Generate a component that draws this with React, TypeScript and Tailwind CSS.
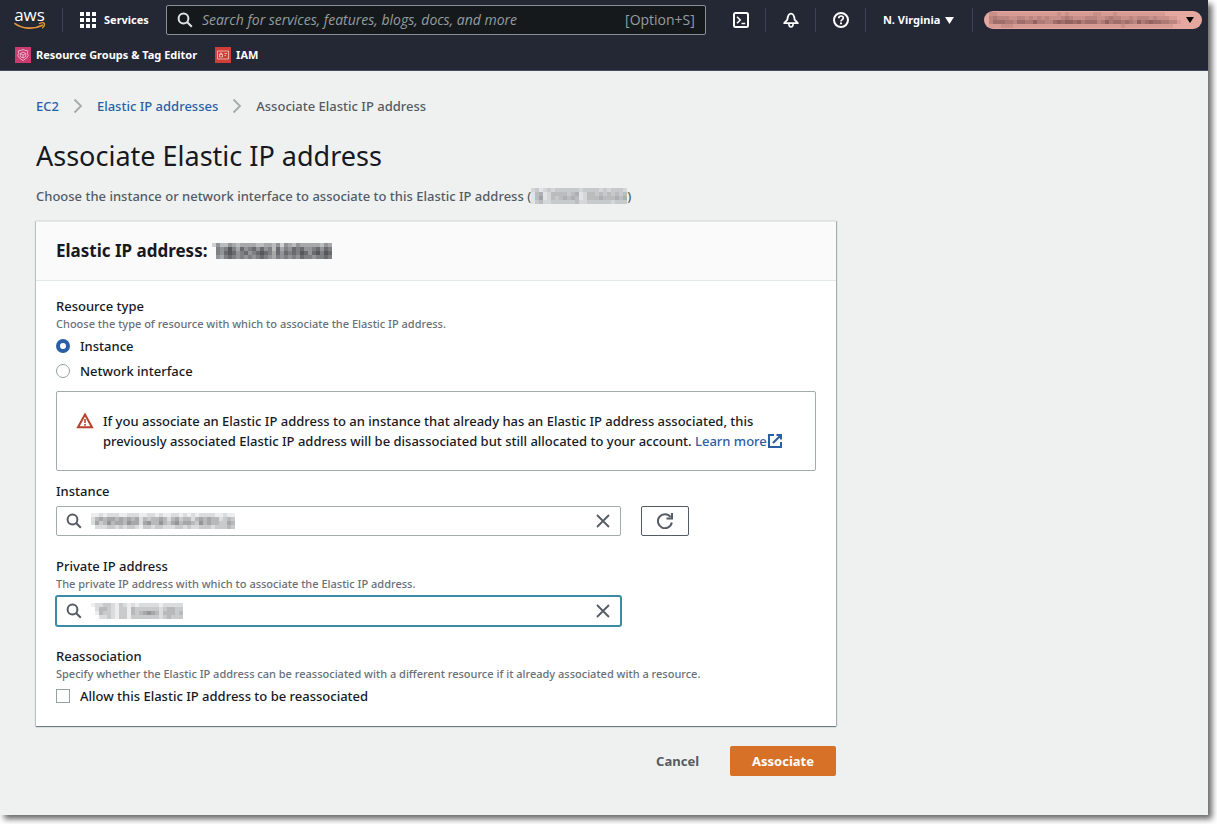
import type { ReactNode } from "react";

const NAV_FONT = "text-[11px] leading-4 font-bold";
const BODY_FONT = "text-[13px] leading-5 font-medium";

function Mosaic({ rows, cell, color, label, className }: { rows: string[]; cell: number; color: string; label: string; className?: string }) {
  const w = rows[0].length * cell;
  const h = rows.length * cell;
  return (
    <svg role="img" aria-label={label} width={w} height={h} viewBox={`0 0 ${w} ${h}`} shapeRendering="crispEdges" className={className}>
      {rows.map((row, y) =>
        row.split("").map((level, x) => (
          <rect key={`${x}-${y}`} x={x * cell} y={y * cell} width={cell} height={cell} fill={color} fillOpacity={Number(level) / 10} />
        )),
      )}
    </svg>
  );
}

const IP_SMALL = [
  "231232333333233332323332",
  "145124444345124434343434",
  "146124345454124445444545",
  "134223333334223333332333",
];
const IP_LARGE = [
  "253354344443344352543544444354",
  "065686475675756374657675567576",
  "065787567567876475767687578687",
  "054676565656765465656576656676",
];
const INSTANCE_ID = [
  "112122211222112212112212121222211211",
  "245455454545243445424534424545442343",
  "253464554655256446435645543645443354",
  "022233232332133233222332322333233343",
];
const PRIVATE_IP = [
  "12233213212122222122222",
  "02443213314333333234433",
  "01433213314345654244434",
  "00223213313333333234333",
];
const ACCOUNT = [
  "221111111111111112121111112211121111111111110000",
  "343332233232323222343222333223433223233323222110",
  "355544355446443356566564555346455454364565544331",
  "111222111111111111111111111111111211111111111100",
];

function SearchIcon({ className }: { className?: string }) {
  return (
    <svg aria-hidden="true" width="16" height="16" viewBox="0 0 16 16" fill="none" stroke="currentColor" strokeWidth="2" className={className}>
      <circle cx="6.500" cy="6.500" r="4.900" />
      <path d="M10 10l4.800 4.800" />
    </svg>
  );
}

function Divider() {
  return <span aria-hidden="true" className="h-6 w-px bg-[#3c4350]" />;
}

function IconButton({ label, children }: { label: string; children: ReactNode }) {
  return (
    <button type="button" aria-label={label} className="flex w-[49px] justify-center pl-px text-white">
      <svg aria-hidden="true" width="16" height="16" viewBox="0 0 16 16" fill="none" stroke="currentColor" strokeWidth="2" strokeLinejoin="round">
        {children}
      </svg>
    </button>
  );
}

function Header() {
  return (
    <header className="border-b border-[#454a5c] bg-[#232834] text-white">
      <div className="flex h-10 items-center">
        <a href="#home" aria-label="AWS home" className="flex w-[62px] shrink-0 pl-[14px]">
          <svg aria-hidden="true" width="32" height="32" viewBox="0 0 32 32">
            <text x="15.500" y="17" textAnchor="middle" fill="#fff" fontSize="17" fontWeight="500" fontFamily="'Open Sans', sans-serif">aws</text>
            <path d="M1 19.600C9 25.300 20 25.600 28.200 21.200" fill="none" stroke="#e8973a" strokeWidth="1.700" strokeLinecap="round" />
            <path d="M25.400 19.500c2-.9 4.400-.8 4.900-.1.400.8-.3 3-1.700 4.400" fill="none" stroke="#e8973a" strokeWidth="1.300" strokeLinecap="round" />
          </svg>
        </a>
        <Divider />
        <button type="button" className={`ml-[17px] flex items-center gap-2 ${NAV_FONT}`}>
          <svg aria-hidden="true" width="16" height="16" viewBox="0 0 16 16" fill="currentColor">
            {[0, 6, 12].map((y) => [0, 6, 12].map((x) => <rect key={`${x}-${y}`} x={x} y={y} width="4" height="4" />))}
          </svg>
          Services
        </button>
        <label className="ml-[17px] flex h-[30px] max-w-[540px] flex-1 items-center rounded-xs border border-[#8a9196] bg-[#16191c] px-[10px]">
          <SearchIcon className="shrink-0 text-[#dfe3e6]" />
          <input
            type="search"
            aria-label="Search"
            placeholder="Search for services, features, blogs, docs, and more"
            className="ml-[9px] min-w-0 flex-1 bg-transparent font-['Open_Sans','Noto_Sans',sans-serif] text-[14px] leading-5 italic outline-none placeholder:text-[#959ca1]"
          />
          <span className="font-['Open_Sans','Noto_Sans',sans-serif] text-[14px] leading-5 text-[#959ca1]">[Option+S]</span>
        </label>
        <div className="ml-[10px] flex items-center">
          <IconButton label="CloudShell">
            <rect x="1" y="1" width="14" height="14" rx="1.500" />
            <path d="M4 4.800l3.200 3.200L4 11.200M8.500 11.500H12.200" strokeWidth="1.600" strokeLinejoin="miter" />
          </IconButton>
          <Divider />
          <IconButton label="Notifications">
            <path d="M1.200 11.200h13.600L11.600 7.600C11.300 4.200 10 1.600 8 1.600S4.700 4.200 4.400 7.600z" strokeWidth="1.800" />
            <path d="M5.800 11.800c.1 2.100.8 3.200 2.200 3.200s2.100-1.100 2.200-3.200" strokeWidth="1.600" />
          </IconButton>
          <Divider />
          <IconButton label="Support">
            <circle cx="8" cy="8" r="7" />
            <path d="M5.700 6.300c.1-1.500 1-2.300 2.300-2.300s2.300.8 2.300 2c0 1.600-2.300 1.600-2.300 3.400" strokeWidth="1.700" />
            <path d="M8 10.400v1.900" />
          </IconButton>
          <Divider />
        </div>
        <button type="button" className={`ml-[17px] flex shrink-0 items-center gap-[5px] ${NAV_FONT}`}>
          N. Virginia
          <svg aria-hidden="true" width="9" height="7" viewBox="0 0 9 7" fill="currentColor"><path d="M0 0h9L4.500 7z" /></svg>
        </button>
        <div className="ml-auto flex items-center gap-[11px] pr-[6px]">
          <Divider />
          <button type="button" aria-label="Account" className="flex h-[18px] w-[218px] items-center justify-between rounded-full bg-[#e5a8a0] pr-2 pl-[5px] text-black">
            <Mosaic rows={ACCOUNT} cell={4} color="#5b3434" label="Account name, redacted" className="h-4" />
            <svg aria-hidden="true" width="8" height="6" viewBox="0 0 8 6" fill="currentColor"><path d="M0 0h8L4 6z" /></svg>
          </button>
        </div>
      </div>
      <nav aria-label="Favorites" className={`flex h-[30px] items-center gap-[18px] px-[15px] ${NAV_FONT}`}>
        <a href="#resource-groups" className="flex items-center gap-[5px]">
          <svg aria-hidden="true" width="16" height="16" viewBox="0 0 16 16" fill="none" stroke="#fff" strokeOpacity=".7" strokeWidth=".8">
            <rect width="16" height="16" fill="#cb3b70" stroke="none" />
            <path d="M8 2.400l2 1 2.800.4-.4 2.700.8 2-1.400 2.300L8 13.600l-3.800-2.800L2.800 8.500l.8-2-.4-2.700L6 3.400z" />
            <path d="M8 5l2.700 1.500v3L8 11 5.300 9.500v-3zM8 8l2.700-1.500M8 8v3M8 8L5.300 6.500" />
          </svg>
          Resource Groups &amp; Tag Editor
        </a>
        <a href="#iam" className="flex items-center gap-[5px]">
          <svg aria-hidden="true" width="16" height="16" viewBox="0 0 16 16" fill="none" stroke="#fff" strokeOpacity=".7" strokeWidth=".8">
            <rect width="16" height="16" fill="#cf3f38" stroke="none" />
            <path d="M2.500 4h11v8h-11zM4.500 7.500h3v2.500h-3zM5.200 7.500V6h1.600v1.500M9.500 6.500h2.500M9.500 8.500h1.500" />
          </svg>
          IAM
        </a>
      </nav>
    </header>
  );
}

function Chevron() {
  return (
    <svg aria-hidden="true" width="10" height="16" viewBox="0 0 10 16" fill="none" stroke="#a3abab" strokeWidth="1.800" className="mx-[14px]">
      <path d="M1.500 1.500L8 8l-6.500 6.500" />
    </svg>
  );
}

function Label({ children, htmlFor }: { children: ReactNode; htmlFor: string }) {
  return <label htmlFor={htmlFor} className="block">{children}</label>;
}

function Hint({ children }: { children: ReactNode }) {
  return <p className="text-[11px] leading-4 text-[#687078]">{children}</p>;
}

function ComboField({ id, rows, label, focused }: { id: string; rows: string[]; label: string; focused?: boolean }) {
  const frame = focused ? "border-[#3a8ba3] shadow-[0_0_0_1px_#3a8ba3]" : "border-[#a3abac]";
  return (
    <div className={`flex h-[30px] w-full max-w-[565px] items-center rounded-xs border bg-white px-[9px] ${frame}`}>
      <SearchIcon className="shrink-0 text-[#545b64]" />
      <Mosaic rows={rows} cell={4} color="#4c5054" label={label} className="ml-[9px] shrink-0" />
      <input id={id} type="text" className="min-w-0 flex-1 bg-transparent outline-none" />
      <button type="button" aria-label="Clear" className="text-[#545b64]">
        <svg aria-hidden="true" width="16" height="14" viewBox="0 0 16 14" fill="none" stroke="currentColor" strokeWidth="1.800">
          <path d="M2 1l12 12M14 1L2 13" />
        </svg>
      </button>
    </div>
  );
}

function RadioRow({ children, checked }: { children: ReactNode; checked?: boolean }) {
  return (
    <label className="flex items-center gap-[10px]">
      <input
        type="radio"
        name="resource-type"
        defaultChecked={checked}
        className="size-[14px] appearance-none rounded-full border border-[#95a1a3] bg-white checked:border-[4px] checked:border-[#2b5fa5]"
      />
      {children}
    </label>
  );
}

export default function App() {
  return (
    <div className="flex min-h-screen bg-white pr-[9px] pb-[9px] font-['Noto_Sans','Open_Sans',sans-serif] text-[#16191f]">
      <div className="min-w-0 flex-1 bg-[#eff1f1] shadow-[4px_4px_6px_rgba(0,0,0,0.6)]">
        <Header />
        <main className={`px-9 pt-[25px] pb-9 ${BODY_FONT}`}>
          <nav aria-label="Breadcrumb" className="flex items-center text-[#545b64]">
            <a href="#ec2" className="text-[#2b5fa5]">EC2</a>
            <Chevron />
            <a href="#addresses" className="text-[#2b5fa5]">Elastic IP addresses</a>
            <Chevron />
            <span aria-current="page">Associate Elastic IP address</span>
          </nav>
          <h1 className="mt-[22px] text-[27px] leading-9 font-normal">Associate Elastic IP address</h1>
          <p className="mt-3 flex items-center text-[#545b64]">
            Choose the instance or network interface to associate to this Elastic IP address (
            <Mosaic rows={IP_SMALL} cell={4} color="#6b6f73" label="IP address, redacted" />)
          </p>

          <form className="mt-[15px] w-full max-w-[800px]" onSubmit={(e) => e.preventDefault()}>
            <section className="bg-white shadow-[0_1px_1px_0_rgba(0,28,36,0.5),1px_0_1px_0_rgba(0,28,36,0.25),-1px_0_1px_0_rgba(0,28,36,0.15)]">
              <div className="flex h-[60px] items-center border-y border-[#e3e8e8] bg-[#fafafa] px-5">
                <h2 className="flex items-center gap-[5px] text-[17px] leading-6 font-bold">
                  Elastic IP address:
                  <Mosaic rows={IP_LARGE} cell={4} color="#2b2e33" label="IP address, redacted" />
                </h2>
              </div>
              <div className="px-5 pt-[15px] pb-5">
                <fieldset>
                  <legend>Resource type</legend>
                  <Hint>Choose the type of resource with which to associate the Elastic IP address.</Hint>
                  <div className="mt-1 flex flex-col gap-[5px]">
                    <RadioRow checked>Instance</RadioRow>
                    <RadioRow>Network interface</RadioRow>
                  </div>
                </fieldset>

                <div role="alert" className="mt-[10px] flex gap-[9px] rounded-xs border border-[#a3abac] p-[19px]">
                  <svg aria-hidden="true" width="18" height="18" viewBox="0 0 18 18" fill="none" stroke="#b8402a" strokeWidth="2" className="mt-px shrink-0">
                    <path d="M9 2.500L2 15.200h14z" strokeLinejoin="miter" />
                    <path d="M9 7v4M9 12v1.800" strokeWidth="1.600" />
                  </svg>
                  <p>
                    If you associate an Elastic IP address to an instance that already has an Elastic IP address associated, this previously associated Elastic IP address will be disassociated but still allocated to your account.{" "}
                    <a href="#learn-more" className="whitespace-nowrap text-[#2b5fa5]">
                      Learn more
                      <svg aria-hidden="true" width="16" height="16" viewBox="0 0 16 16" fill="none" stroke="currentColor" strokeWidth="2" className="inline align-[-3px]">
                        <path d="M7 2H2v12h12V9M9.500 2H14v4.500M14 2L6 10" />
                      </svg>
                    </a>
                  </p>
                </div>

                <div className="mt-[10px]">
                  <Label htmlFor="instance">Instance</Label>
                  <div className="mt-[5px] flex gap-5">
                    <ComboField id="instance" rows={INSTANCE_ID} label="Instance ID, redacted" />
                    <button type="button" aria-label="Refresh" className="flex h-[30px] w-12 shrink-0 items-center justify-center rounded-xs border border-[#545b64] text-[#545b64]">
                      <svg aria-hidden="true" width="16" height="16" viewBox="0 0 16 16" fill="none" stroke="currentColor" strokeWidth="2">
                        <path d="M14.800 9.500A7 7 0 1 1 13.500 4" />
                        <path d="M15 0v5.500H9.500" />
                      </svg>
                    </button>
                  </div>
                </div>

                <div className="mt-5">
                  <Label htmlFor="private-ip">Private IP address</Label>
                  <Hint>The private IP address with which to associate the Elastic IP address.</Hint>
                  <div className="mt-1">
                    <ComboField id="private-ip" rows={PRIVATE_IP} label="Private IP, redacted" focused />
                  </div>
                </div>

                <fieldset className="mt-5">
                  <legend>Reassociation</legend>
                  <Hint>Specify whether the Elastic IP address can be reassociated with a different resource if it already associated with a resource.</Hint>
                  <label className="mt-1 flex items-center gap-[10px]">
                    <input type="checkbox" className="size-[14px] appearance-none border border-[#95a1a3] bg-white checked:bg-[#2b5fa5]" />
                    Allow this Elastic IP address to be reassociated
                  </label>
                </fieldset>
              </div>
            </section>

            <div className="mt-5 flex justify-end gap-[9px]">
              <button type="button" className="h-[30px] px-[22px] font-bold text-[#545b64]">Cancel</button>
              <button type="submit" className="h-[30px] rounded-xs bg-[#d87128] px-[22px] font-bold text-white">Associate</button>
            </div>
          </form>
        </main>
      </div>
    </div>
  );
}
